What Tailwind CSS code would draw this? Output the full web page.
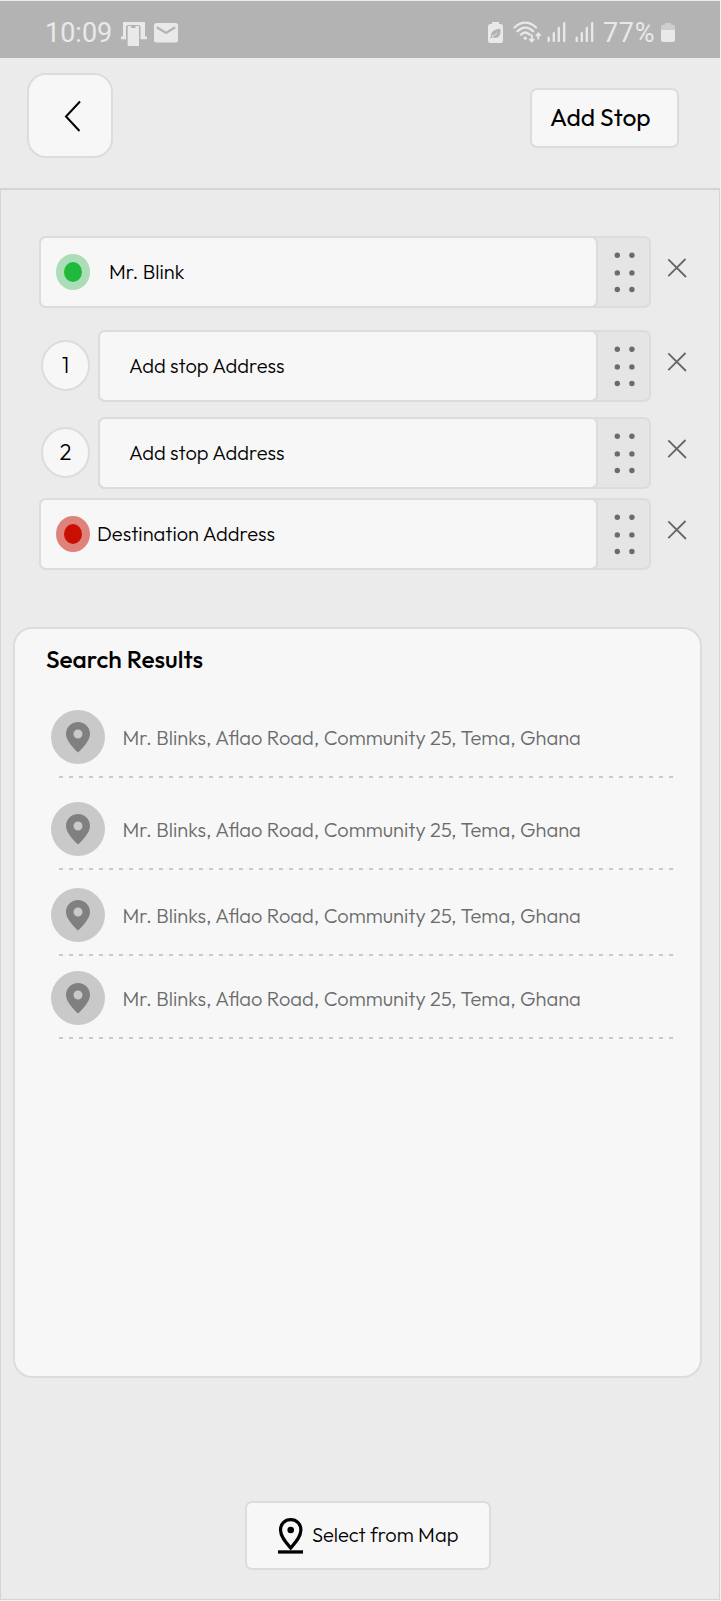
<!DOCTYPE html>
<html lang="en">
<head>
<meta charset="utf-8">
<title>Add Stop</title>
<script src="https://cdn.jsdelivr.net/npm/@tailwindcss/browser@4"></script>
</head>
<body class="bg-[#f4f4f4] text-black font-['Outfit',Lato,sans-serif]">
<svg class="hidden">
  <symbol id="dots" viewBox="0 0 21 42"><g fill="#6b6b6b"><circle cx="3.3" cy="3.3" r="2.7"/><circle cx="17.9" cy="3.3" r="2.7"/><circle cx="3.3" cy="20.9" r="2.7"/><circle cx="17.9" cy="20.9" r="2.7"/><circle cx="3.3" cy="37.5" r="2.7"/><circle cx="17.9" cy="37.5" r="2.7"/></g></symbol>
  <symbol id="close" viewBox="0 0 20 20"><path d="M1.3 18.200 18.500 1M1.300 1.300 19 19" stroke="#666" stroke-width="1.8" fill="none"/></symbol>
  <symbol id="pin" viewBox="0 0 24 31"><path fill="#808080" fill-rule="evenodd" d="M12 0C5.300 0 0 5.200 0 12c0 3.300 1.700 6.500 4 9.700 2.200 3 5 6.300 8 8.900 3-2.600 5.800-5.900 8-8.900 2.300-3.200 4-6.400 4-9.700C24 5.200 18.700 0 12 0Zm0 7.500a4.500 4.500 0 1 1 0 9 4.500 4.500 0 0 1 0-9Z"/></symbol>
  <symbol id="dash" viewBox="0 0 614 2"><path d="M0 1H614" stroke="#c9c9c9" stroke-width="2" stroke-dasharray="4 6"/></symbol>
  <symbol id="bars" viewBox="0 0 19 20"><path d="M1.700 15.700v3.300M6.800 11.200V19M11.800 6V19M17.200 1.200V19" stroke="#e9e9e9" stroke-width="2.300" stroke-linecap="round"/></symbol>
</svg>

<div class="w-[720px] h-[1600px] flex flex-col bg-[#ebebeb] pt-px">
  <!-- Status bar -->
  <div class="h-[57px] shrink-0 bg-[#b3b3b3] flex items-start pl-[45px] pr-[45px] pt-[16px] text-[#e9e9e9] font-[Roboto,sans-serif] text-[27px] leading-[32px]">
    <span class="w-[76px]">10:09</span>
    <svg class="w-[26px] h-[25px] mt-[5px]" viewBox="0 0 26 25"><path fill="#e9e9e9" d="M2 0h22v14.500h2v2.700H0v-2.700h2Z"/><path fill="#b3b3b3" d="M5 25V5q0-2 2-2h10.500q2 0 2 2v20Z"/><path fill="#e9e9e9" d="M7.500 4h2.700v2h4.300V4h2.700q.8 0 .8.800v19.200H6.700V4.800Q6.700 4 7.500 4Z"/></svg>
    <svg class="w-[24px] h-[20px] mt-[6px] ml-[7px]" viewBox="0 0 24 20"><rect width="24" height="19.500" rx="2.500" fill="#e9e9e9"/><path d="m2.800 4.300 9.200 5.600 9.200-5.600" fill="none" stroke="#b3b3b3" stroke-width="2.200"/></svg>
    <svg class="w-[15px] h-[22px] mt-[5px] ml-auto" viewBox="0 0 15 22"><path fill="#e9e9e9" d="M4 0h7v2h1.500q2.500 0 2.500 2.500v14q0 2.500-2.500 2.500h-10Q0 21 0 18.500v-14Q0 2 2.500 2H4Z"/><path fill="#b3b3b3" d="M12.300 6.700c.7 5-.4 8.800-4.800 9.300-1.300.1-2.300-.2-3-.8l-1.700 1.300-.8-1.200 1.300-1C2.400 9.500 6 7.500 12.300 6.700Z"/><path d="M4 14.600c2.200-.8 3.500-1.800 4.800-3.600" stroke="#e9e9e9" fill="none"/></svg>
    <svg class="w-[29px] h-[23px] mt-[4px] ml-[10px]" viewBox="0 0 29 23" fill="none" stroke="#e9e9e9" stroke-width="2.200" stroke-linecap="round"><path d="M1.500 6.500C8-.1 16.500-.1 23 6.500M4.500 10.300c4.800-4.800 10.800-4.800 15.600 0M7.800 13.700c2.800-2.700 6.200-2.700 9 0"/><circle cx="12.200" cy="17.200" r="1.600" fill="#e9e9e9" stroke="none"/><path d="M18.800 13.500V20M16.400 17.800l2.400 2.700 2.400-2.700M25.300 18.500V12.500M22.900 15l2.400-2.700 2.400 2.700" stroke-width="1.800" stroke-linecap="butt"/></svg>
    <svg class="w-[19px] h-[20px] mt-[5px] ml-[5px]"><use href="#bars"/></svg>
    <svg class="w-[19px] h-[20px] mt-[5px] ml-[9px]"><use href="#bars"/></svg>
    <span class="ml-[9px] tracking-[0.7px] w-[58px]">77%</span>
    <svg class="w-[14px] h-[21px] mt-[5px]" viewBox="0 0 14 21"><path fill="#cecece" d="M4 1h6v1.500h1.500Q14 2.500 14 5v3H0V5q0-2.500 2.500-2.500H4Z"/><path fill="#e9e9e9" d="M0 8h14v9.500q0 2.500-2.500 2.500h-9Q0 20 0 17.500Z"/></svg>
  </div>

  <!-- Header -->
  <header class="h-[130px] shrink-0 flex justify-between items-start pl-[27px] pr-[41px] pt-[15px]">
    <button class="w-[86px] h-[85px] rounded-[19px] border-2 border-[#dcdcdc] bg-[#f7f7f7]">
      <svg class="w-[18px] h-[32px] ml-[35px] mt-px" viewBox="0 0 18 32"><path d="M16 1.500 2 16.500 15.500 31" fill="none" stroke="#000" stroke-width="2"/></svg>
    </button>
    <button class="w-[149px] h-[60px] mt-[15px] rounded-[7px] border-2 border-[#dcdcdc] bg-[#f7f7f7] pl-[18px] pb-px text-left text-[24.6px]">Add Stop</button>
  </header>

  <main class="flex-1 border border-t-2 border-[#d4d4d4] flex flex-col">
    <!-- Stops -->
    <section class="pl-[38px] pr-[31px] pt-[46px] flex flex-col text-[20.1px] font-light">
      <div class="flex items-start">
        <div class="w-[612px] h-[72px] flex rounded-[7px] border-2 border-[#dcdcdc] bg-[#e5e5e5]">
          <div class="w-[559px] -my-[2px] -ml-[2px] border-2 border-[#dcdcdc] rounded-[7px] bg-[#f7f7f7] flex items-center pl-[15px]">
            <span class="w-[34px] h-[36px] rounded-[50%] bg-[#abddb7] flex items-center justify-center"><span class="w-[18px] h-[20px] rounded-[50%] bg-[#1dba3b]"></span></span>
            <span class="ml-[19px]">Mr. Blink</span>
          </div>
          <svg class="w-[21px] h-[42px] ml-[16px] mt-[14px]"><use href="#dots"/></svg>
        </div>
        <svg class="w-[20px] h-[20px] ml-auto mt-[22px] mr-px"><use href="#close"/></svg>
      </div>
      <div class="flex items-start mt-[22px]">
        <span class="w-[49px] h-[51px] ml-[2px] mr-[8px] mt-[10px] rounded-[50%] border-2 border-[#dcdcdc] bg-[#f7f7f7] flex items-center justify-center text-[22px]">1</span>
        <div class="w-[553px] h-[72px] flex rounded-[7px] border-2 border-[#dcdcdc] bg-[#e5e5e5]">
          <div class="w-[500px] -my-[2px] -ml-[2px] border-2 border-[#dcdcdc] rounded-[7px] bg-[#f7f7f7] flex items-center pl-[29px]">Add stop Address</div>
          <svg class="w-[21px] h-[42px] ml-[16px] mt-[14px]"><use href="#dots"/></svg>
        </div>
        <svg class="w-[20px] h-[20px] ml-auto mt-[22px] mr-px"><use href="#close"/></svg>
      </div>
      <div class="flex items-start mt-[15px]">
        <span class="w-[49px] h-[51px] ml-[2px] mr-[8px] mt-[10px] rounded-[50%] border-2 border-[#dcdcdc] bg-[#f7f7f7] flex items-center justify-center text-[22px]">2</span>
        <div class="w-[553px] h-[72px] flex rounded-[7px] border-2 border-[#dcdcdc] bg-[#e5e5e5]">
          <div class="w-[500px] -my-[2px] -ml-[2px] border-2 border-[#dcdcdc] rounded-[7px] bg-[#f7f7f7] flex items-center pl-[29px]">Add stop Address</div>
          <svg class="w-[21px] h-[42px] ml-[16px] mt-[14px]"><use href="#dots"/></svg>
        </div>
        <svg class="w-[20px] h-[20px] ml-auto mt-[22px] mr-px"><use href="#close"/></svg>
      </div>
      <div class="flex items-start mt-[9px]">
        <div class="w-[612px] h-[72px] flex rounded-[7px] border-2 border-[#dcdcdc] bg-[#e5e5e5]">
          <div class="w-[559px] -my-[2px] -ml-[2px] border-2 border-[#dcdcdc] rounded-[7px] bg-[#f7f7f7] flex items-center pl-[15px]">
            <span class="w-[34px] h-[36px] rounded-[50%] bg-[#e0827c] flex items-center justify-center"><span class="w-[18px] h-[20px] rounded-[50%] bg-[#c90f02]"></span></span>
            <span class="ml-[7px]">Destination Address</span>
          </div>
          <svg class="w-[21px] h-[42px] ml-[16px] mt-[14px]"><use href="#dots"/></svg>
        </div>
        <svg class="w-[20px] h-[20px] ml-auto mt-[22px] mr-px"><use href="#close"/></svg>
      </div>
    </section>

    <!-- Search results -->
    <section class="w-[689px] h-[751px] ml-[12px] mt-[57px] rounded-[19px] border-2 border-[#dcdcdc] bg-[#f7f7f7] pt-[14px] pl-[31px]">
      <h2 class="text-[24.5px] leading-8 font-medium">Search Results</h2>
      <ul class="text-[20.1px] font-light text-[#6b6b6b] pl-[4.500px]">
        <li class="mt-[35px]">
          <div class="flex items-center"><span class="size-[54px] rounded-full bg-[#c9c9c9] flex items-center justify-center"><svg class="w-[24px] h-[31px]"><use href="#pin"/></svg></span><span class="ml-[18px] mt-[2px]">Mr. Blinks, Aflao Road, Community 25, Tema, Ghana</span></div>
          <svg class="w-[614px] h-[2px] ml-[8.500px] mt-[12px]"><use href="#dash"/></svg>
        </li>
        <li class="mt-[24px]">
          <div class="flex items-center"><span class="size-[54px] rounded-full bg-[#c9c9c9] flex items-center justify-center"><svg class="w-[24px] h-[31px]"><use href="#pin"/></svg></span><span class="ml-[18px] mt-[2px]">Mr. Blinks, Aflao Road, Community 25, Tema, Ghana</span></div>
          <svg class="w-[614px] h-[2px] ml-[8.500px] mt-[12px]"><use href="#dash"/></svg>
        </li>
        <li class="mt-[18px]">
          <div class="flex items-center"><span class="size-[54px] rounded-full bg-[#c9c9c9] flex items-center justify-center"><svg class="w-[24px] h-[31px]"><use href="#pin"/></svg></span><span class="ml-[18px] mt-[2px]">Mr. Blinks, Aflao Road, Community 25, Tema, Ghana</span></div>
          <svg class="w-[614px] h-[2px] ml-[8.500px] mt-[12px]"><use href="#dash"/></svg>
        </li>
        <li class="mt-[15px]">
          <div class="flex items-center"><span class="size-[54px] rounded-full bg-[#c9c9c9] flex items-center justify-center"><svg class="w-[24px] h-[31px]"><use href="#pin"/></svg></span><span class="ml-[18px] mt-[2px]">Mr. Blinks, Aflao Road, Community 25, Tema, Ghana</span></div>
          <svg class="w-[614px] h-[2px] ml-[8.500px] mt-[12px]"><use href="#dash"/></svg>
        </li>
      </ul>
    </section>

    <button class="w-[246px] h-[69px] ml-[244px] mt-[123px] rounded-[7px] border-2 border-[#dcdcdc] bg-[#f7f7f7] flex items-center pl-[31px] text-[20.1px] font-light">
      <svg class="w-[25px] h-[36px]" viewBox="0 0 25 36"><path d="M12.700 1.700c-6 0-10.200 4.500-10.200 10.300 0 6.800 5.600 12.700 10.200 18 4.600-5.300 10.200-11.200 10.200-18 0-5.800-4.200-10.300-10.200-10.300Z" fill="none" stroke="#000" stroke-width="3.200"/><circle cx="12.700" cy="12" r="3.300"/><path d="M0 32.300h25v3.300H0Z"/></svg>
      <span class="ml-[9px] -mt-px">Select from Map</span>
    </button>
  </main>
</div>
</body>
</html>
